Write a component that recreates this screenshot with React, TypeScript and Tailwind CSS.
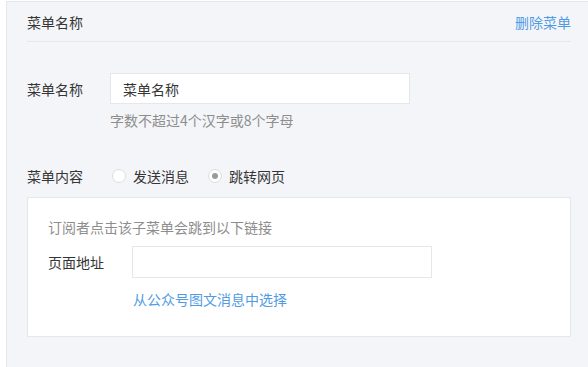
import React from 'react'

const font = { fontFamily: '"Microsoft YaHei", "Noto Sans CJK SC", sans-serif' }

const Radio = ({ checked, label }: { checked?: boolean; label: string }) => (
  <label className="flex items-center mr-[19px]">
    <span className="w-[14px] h-[14px] rounded-full border border-[#dcdde0] bg-white flex items-center justify-center">
      {checked && <span className="w-[6px] h-[6px] rounded-full bg-[#9a9a9a]" />}
    </span>
    <span className="ml-[7px] text-[#353535]">{label}</span>
  </label>
)

export default function App() {
  return (
    <div className="w-[588px] h-[367px] bg-white pt-px pl-[6px] overflow-hidden text-[14px] leading-5" style={font}>
      <div className="h-full border-l border-t border-[#e4e8eb] bg-[#f4f5f9] pl-5 pr-[17px]">
        {/* header */}
        <div className="h-10 flex items-center justify-between border-b border-[#e4e8eb]">
          <span className="text-[#353535]">菜单名称</span>
          <a className="text-[#509ce4] cursor-pointer">删除菜单</a>
        </div>

        {/* name row */}
        <div className="mt-[31px] flex items-center">
          <span className="w-[83px] text-[#353535]">菜单名称</span>
          <div className="w-[300px] h-[31px] bg-white border border-[#e7e7eb] flex items-center px-3 text-[#353535]">菜单名称</div>
        </div>
        <div className="ml-[83px] mt-[6px] text-[#8d8d8d]">字数不超过4个汉字或8个字母</div>

        {/* content row */}
        <div className="mt-9 flex items-center">
          <span className="w-[85px] text-[#353535]">菜单内容</span>
          <Radio label="发送消息" />
          <Radio checked label="跳转网页" />
        </div>

        <div className="mt-[11px] bg-white border border-[#e4e8eb] h-[140px] px-5 pt-[19px]">
          <div className="text-[#8d8d8d]">订阅者点击该子菜单会跳到以下链接</div>
          <div className="mt-[9px] flex items-center">
            <span className="w-[84px] text-[#353535]">页面地址</span>
            <div className="w-[300px] h-[32px] bg-white border border-[#e7e7eb]" />
          </div>
          <div className="ml-[85px] mt-[11px]">
            <a className="text-[#509ce4] cursor-pointer">从公众号图文消息中选择</a>
          </div>
        </div>
      </div>
    </div>
  )
}
